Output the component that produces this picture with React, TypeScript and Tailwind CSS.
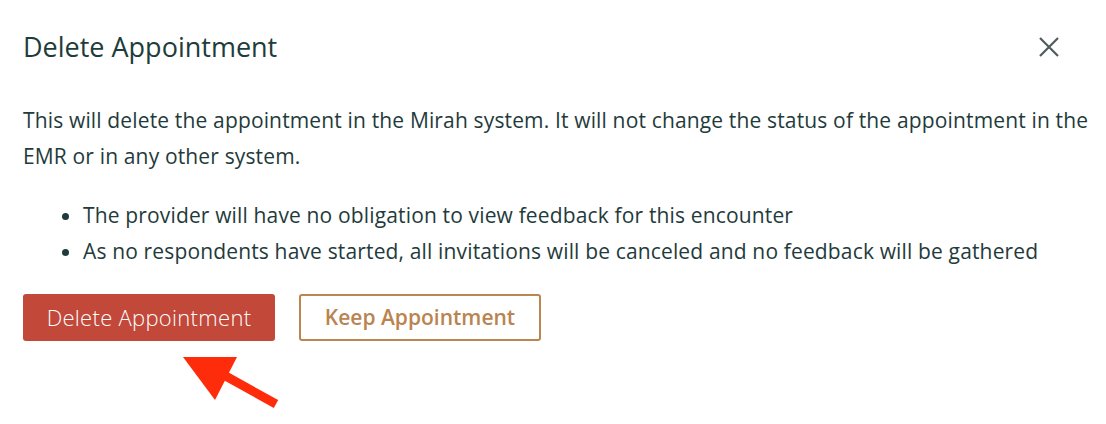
import React from 'react';

const font = { fontFamily: '"Open Sans", "Noto Sans", sans-serif' };

export default function App() {
  return (
    <div className="relative w-[1106px] h-[424px] bg-white text-[#1f3b3b]" style={font}>
      <div className="pl-[23px] pr-[10px] pt-[31px]">
        <div className="flex items-center justify-between">
          <h2 className="text-[27px] leading-[32px] font-normal text-[#1e3c3c]">Delete Appointment</h2>
          <button className="mr-[37px] text-[#4f5d5d]" aria-label="Close">
            <svg width="20" height="20" viewBox="0 0 20 20" fill="none" stroke="currentColor" strokeWidth="2.2">
              <path d="M1 1 L19 19 M19 1 L1 19" />
            </svg>
          </button>
        </div>

        <p className="mt-[39px] text-[21px] leading-[36px] tracking-[0.15px]">
          This will delete the appointment in the Mirah system. It will not change the status of the appointment in the EMR or in any other system.
        </p>

        <ul className="mt-[23px] pl-[60px] text-[21px] leading-[36px] tracking-[0.15px] list-disc">
          <li>The provider will have no obligation to view feedback for this encounter</li>
          <li>As no respondents have started, all invitations will be canceled and no feedback will be gathered</li>
        </ul>

        <div className="mt-[25px] flex gap-6">
          <button className="w-[252px] h-[47px] rounded-[3px] bg-[#c2483a] text-white text-[22px] font-light tracking-[0.3px]">
            Delete Appointment
          </button>
          <button className="w-[242px] h-[47px] rounded-[3px] border-2 border-[#ba8751] text-[#b98450] text-[21px] font-semibold">
            Keep Appointment
          </button>
        </div>
      </div>

      <svg className="absolute left-0 top-0 pointer-events-none" width="1106" height="424">
        <polygon points="183,357 237,357 215,400" fill="#ff2c0c" />
        <line x1="222" y1="374" x2="276" y2="404" stroke="#ff2c0c" strokeWidth="9" />
      </svg>
    </div>
  );
}
